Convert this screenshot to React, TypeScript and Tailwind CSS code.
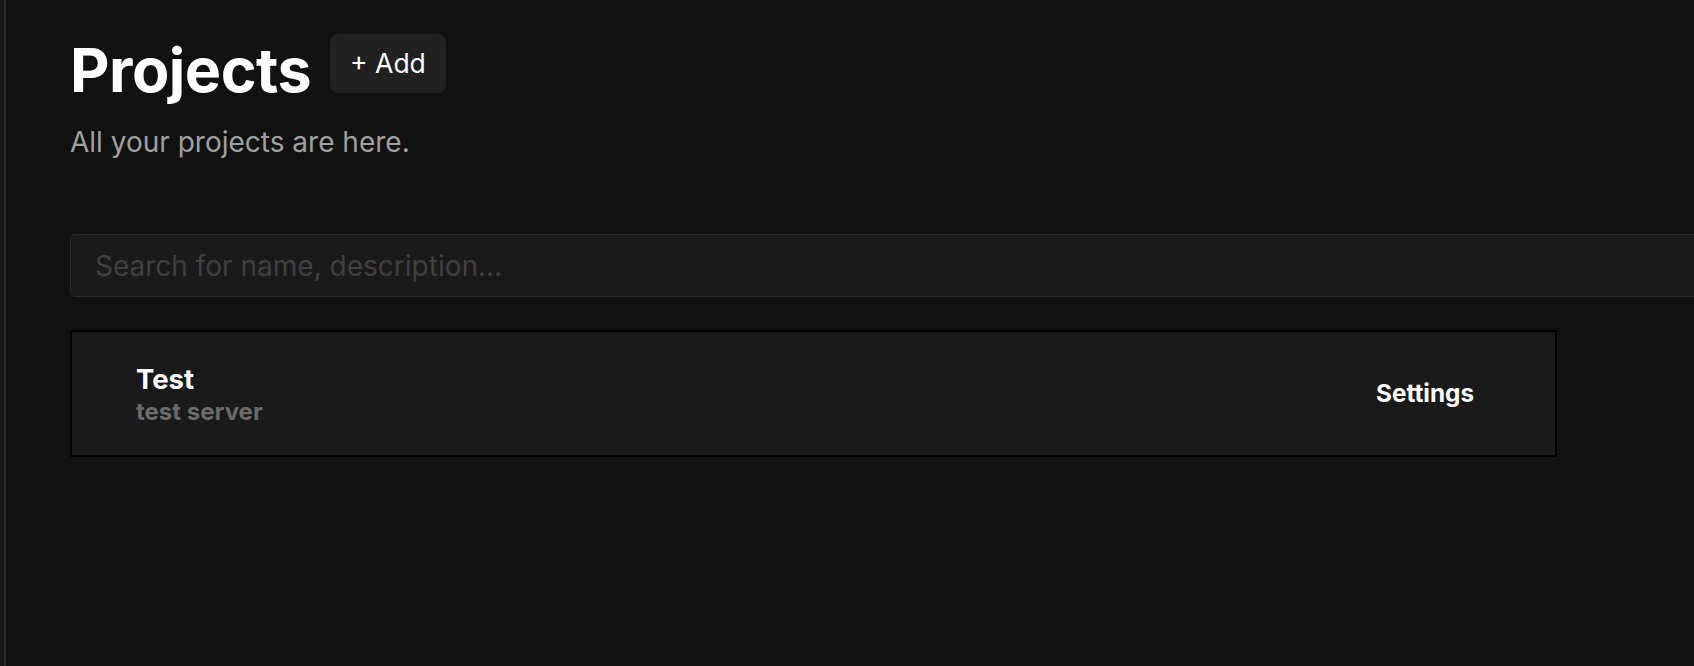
import React from "react";

export default function App() {
  return (
    <div
      className="flex min-h-screen w-full overflow-hidden bg-[#111111] text-white"
      style={{ fontFamily: "Inter, 'Noto Sans', sans-serif" }}
    >
      <div className="w-[4px] shrink-0 bg-[#161616]" />
      <div className="w-[2px] shrink-0 bg-[#282828]" />
      <main className="flex min-w-0 flex-1 flex-col pl-[64px] pt-[34px]">
        <div className="flex items-start gap-[19px]">
          <h1 className="mt-[6px] text-[61px] font-bold leading-[60px] tracking-[-0.5px]">Projects</h1>
          <button className="flex h-[59px] items-center rounded-[8px] bg-[#212121] px-[20px] text-[26.5px] font-normal text-white">
            + Add
          </button>
        </div>
        <p className="mt-[26px] text-[28px] leading-[32px] text-[#a0a0a0]">All your projects are here.</p>
        <input
          className="mt-[76px] h-[63px] w-[1700px] shrink-0 rounded-[5px] border border-[#2a2a2a] bg-[#1a1a1a] px-[24px] text-[28px] text-white outline-none placeholder:text-[#404040]"
          placeholder="Search for name, description..."
        />
        <div className="mt-[33px] flex h-[127px] w-[1487px] items-center justify-between border-2 border-black bg-[#1a1a1a] pl-[64px] pr-[81px]">
          <div className="flex flex-col">
            <span className="text-[27.5px] font-bold leading-[36px] text-white">Test</span>
            <span className="text-[24px] font-bold leading-[30px] text-[#6b6b6b]">test server</span>
          </div>
          <button className="text-[24.3px] font-bold text-white">Settings</button>
        </div>
      </main>
    </div>
  );
}
